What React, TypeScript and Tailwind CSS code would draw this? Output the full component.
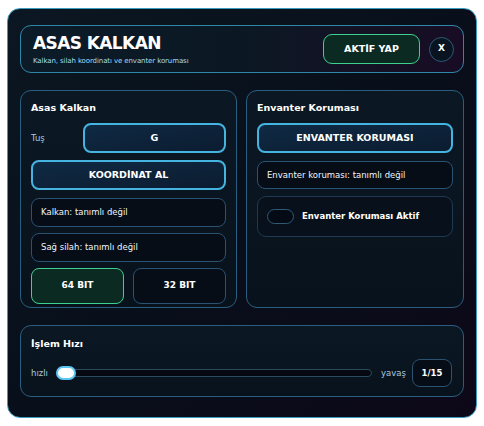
import { useState } from "react";

const font = { fontFamily: '"DejaVu Sans", Verdana, sans-serif' };

const App = () => {
    const [aktif, setAktif] = useState(false);
    const [bit, setBit] = useState(64);
    const [envanter, setEnvanter] = useState(false);
    const [hiz, setHiz] = useState(1);

    return (
        <div className="w-[484px] h-[426px] bg-white pt-[8px] pl-[7px]" style={font}>
            <div className="w-[470px] h-[410px] rounded-[13px] border border-[#3a9cc0] bg-gradient-to-br from-[#0b1722] via-[#080f1a] to-[#0d0818] px-[12px] pt-[16px] text-white">
                {/* başlık */}
                <div className="h-[48px] rounded-[11px] border border-[#2f87a8] bg-gradient-to-r from-[#0c1b28] via-[#0b1824] to-[#180c24] flex items-center pl-[12px] pr-[9px]">
                    <div className="flex-1">
                        <h1 className="text-[17px] font-bold leading-[20px] tracking-[-0.6px]">ASAS KALKAN</h1>
                        <p className="text-[7px] leading-[10px] mt-[3px] text-[#a6dcf2] tracking-[-0.1px]">Kalkan, silah koordinatı ve envanter koruması</p>
                    </div>
                    <button onClick={() => setAktif(!aktif)} className="w-[97px] h-[30px] rounded-[9px] border border-[#3fcf8e] bg-[#0b2a22] text-[9.5px] font-bold">
                        {aktif ? "PASİF YAP" : "AKTİF YAP"}
                    </button>
                    <button className="ml-[9px] w-[25px] h-[25px] rounded-full border border-[#2c5a78] bg-[#0a1420] text-[9px] font-bold">X</button>
                </div>

                <div className="mt-[17px] flex gap-[9px]">
                    {/* sol panel */}
                    <div className="w-[218px] h-[218px] rounded-[11px] border border-[#2a5e80] bg-gradient-to-b from-[#0b1824] to-[#08121c] px-[10px] pt-[11px]">
                        <h2 className="text-[9.5px] font-bold leading-[12px]">Asas Kalkan</h2>
                        <div className="mt-[9px] flex items-center">
                            <span className="w-[52px] text-[8.5px] text-[#a9c9df]">Tuş</span>
                            <button className="flex-1 h-[30px] rounded-[8px] border-2 border-[#45b4e0] bg-gradient-to-br from-[#0f2a44] to-[#0b1c30] text-[9.5px] font-bold">G</button>
                        </div>
                        <button className="mt-[7px] w-full h-[30px] rounded-[8px] border-2 border-[#45b4e0] bg-gradient-to-br from-[#0f2a44] to-[#0b1c30] text-[9.5px] font-bold">KOORDİNAT AL</button>
                        <div className="mt-[8px] h-[29px] rounded-[8px] border border-[#2a5272] bg-[#060d17] flex items-center px-[9px] text-[8.5px] text-[#f2f6fa]">Kalkan: tanımlı değil</div>
                        <div className="mt-[6px] h-[29px] rounded-[8px] border border-[#2a5272] bg-[#060d17] flex items-center px-[9px] text-[8.5px] text-[#f2f6fa]">Sağ silah: tanımlı değil</div>
                        <div className="mt-[6px] flex gap-[9px]">
                            <button onClick={() => setBit(64)} className={`flex-1 h-[36px] rounded-[8px] border text-[9px] font-bold ${bit === 64 ? "border-[#3fcf8e] bg-[#0b2a22]" : "border-[#2a5272] bg-[#060d17]"}`}>64 BIT</button>
                            <button onClick={() => setBit(32)} className={`flex-1 h-[36px] rounded-[8px] border text-[9px] font-bold ${bit === 32 ? "border-[#3fcf8e] bg-[#0b2a22]" : "border-[#2a5272] bg-[#060d17]"}`}>32 BIT</button>
                        </div>
                    </div>

                    {/* sağ panel */}
                    <div className="w-[219px] h-[218px] rounded-[11px] border border-[#2a5e80] bg-gradient-to-b from-[#0b1824] to-[#08121c] px-[10px] pt-[11px]">
                        <h2 className="text-[9.5px] font-bold leading-[12px]">Envanter Koruması</h2>
                        <button className="mt-[9px] w-full h-[30px] rounded-[8px] border-2 border-[#45b4e0] bg-gradient-to-br from-[#0f2a44] to-[#0b1c30] text-[9.5px] font-bold">ENVANTER KORUMASI</button>
                        <div className="mt-[8px] h-[28px] rounded-[8px] border border-[#2a5272] bg-[#060d17] flex items-center px-[9px] text-[8.5px] text-[#f2f6fa]">Envanter koruması: tanımlı değil</div>
                        <div className="mt-[7px] h-[41px] rounded-[9px] border border-[#1f3a52] bg-[#08111b] flex items-center px-[9px]">
                            <button onClick={() => setEnvanter(!envanter)} className={`w-[27px] h-[15px] rounded-full border border-[#2f5a78] ${envanter ? "bg-[#1a8f6a]" : "bg-[#050b14]"}`}></button>
                            <span className="ml-[8px] text-[8.5px] font-bold">Envanter Koruması Aktif</span>
                        </div>
                    </div>
                </div>

                {/* hız */}
                <div className="mt-[17px] h-[72px] rounded-[11px] border border-[#2a5e80] bg-gradient-to-b from-[#0b1824] to-[#08121c] pl-[10px] pr-[11px] pt-[12px]">
                    <h2 className="text-[9.5px] font-bold leading-[12px]">İşlem Hızı</h2>
                    <div className="mt-[9px] flex items-center">
                        <span className="text-[8.5px] text-[#a9c9df]">hızlı</span>
                        <div className="relative ml-[8px] w-[316px] h-[8px] rounded-full border border-[#2a4a5e] bg-[#040810]">
                            <div className="absolute -top-[4px] w-[20px] h-[14px] rounded-full bg-white border-2 border-[#5cc6f2]" style={{ left: `${((hiz - 1) / 14) * 296 - 1}px` }}></div>
                        </div>
                        <span className="ml-[9px] text-[8.5px] text-[#a9c9df]">yavaş</span>
                        <button onClick={() => setHiz(hiz >= 15 ? 1 : hiz + 1)} className="ml-auto w-[40px] h-[28px] rounded-[8px] border border-[#2a5272] bg-[#060d17] text-[8.5px] font-bold">{hiz}/15</button>
                    </div>
                </div>
            </div>
        </div>
    );
};

export default App;
